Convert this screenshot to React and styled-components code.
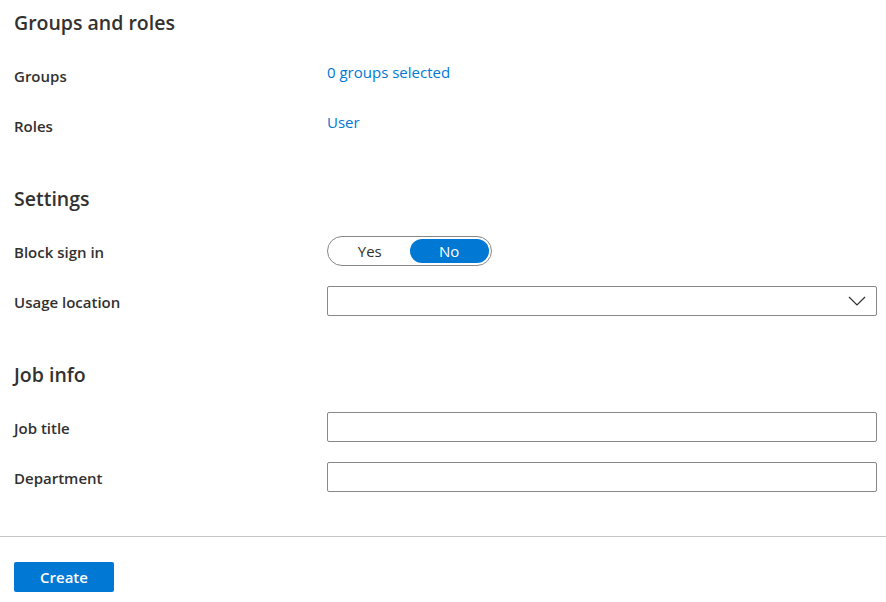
import styled, { createGlobalStyle } from "styled-components";

const GlobalStyle = createGlobalStyle`
  body {
    margin: 0;
    background: #ffffff;
    font-family: "Open Sans", "Noto Sans", sans-serif;
    color: #323130;
  }
`;

const Page = styled.div`
  width: 886px;
  height: 602px;
  overflow: hidden;
  box-sizing: border-box;
`;

const Form = styled.div`
  padding: 10px 9px 0 14px;
`;

const Section = styled.section`
  & + & {
    margin-top: 46px;
  }
`;

const Heading = styled.h2`
  margin: 0 0 24px;
  font-size: 19.5px;
  line-height: 26px;
  font-weight: 600;
  color: #323130;
`;

const Row = styled.div`
  display: grid;
  grid-template-columns: 313px 1fr;
  align-items: center;
  min-height: 30px;
  & + & {
    margin-top: 20px;
  }
`;

const Label = styled.span`
  font-size: 15px;
  font-weight: 600;
  line-height: 20px;
  padding-top: 2px;
`;

const LinkValue = styled.a`
  align-self: start;
  padding-top: 2px;
  font-size: 15px;
  line-height: 20px;
  color: #0078d4;
  text-decoration: none;
  cursor: pointer;
`;

const Toggle = styled.div`
  display: flex;
  width: 165px;
  height: 30px;
  box-sizing: border-box;
  padding: 2px;
  border: 1px solid #8a8886;
  border-radius: 15px;
`;

const ToggleOption = styled.button`
  flex: 1;
  border: none;
  border-radius: 12px;
  font-family: inherit;
  font-size: 15px;
  padding: 0;
  background: ${(p) => (p.$active ? "#0078d4" : "transparent")};
  color: ${(p) => (p.$active ? "#ffffff" : "#323130")};
  cursor: pointer;
`;

const Input = styled.input`
  box-sizing: border-box;
  width: 100%;
  height: 30px;
  border: 1px solid #8a8886;
  border-radius: 2px;
  padding: 0 8px;
  font-family: inherit;
  font-size: 15px;
  outline: none;
`;

const Select = styled.div`
  box-sizing: border-box;
  height: 30px;
  border: 1px solid #8a8886;
  border-radius: 2px;
  display: flex;
  align-items: center;
  justify-content: flex-end;
  padding-right: 10px;
`;

const Divider = styled.hr`
  margin: 44px 0 0;
  border: none;
  border-top: 1px solid #c8c6c4;
`;

const Footer = styled.div`
  padding: 25px 14px 0;
`;

const PrimaryButton = styled.button`
  width: 100px;
  height: 30px;
  border: none;
  border-radius: 2px;
  background: #0078d4;
  color: #ffffff;
  font-family: inherit;
  font-size: 15px;
  font-weight: 600;
  cursor: pointer;
`;

const Chevron = () => (
  <svg width="18" height="10" viewBox="0 0 18 10">
    <path d="M1 1 L9 9 L17 1" fill="none" stroke="#323130" strokeWidth="1.2" />
  </svg>
);

export default function App() {
  return (
    <Page>
      <GlobalStyle />
      <Form>
        <Section>
          <Heading>Groups and roles</Heading>
          <Row>
            <Label>Groups</Label>
            <LinkValue>0 groups selected</LinkValue>
          </Row>
          <Row>
            <Label>Roles</Label>
            <LinkValue>User</LinkValue>
          </Row>
        </Section>

        <Section>
          <Heading>Settings</Heading>
          <Row>
            <Label>Block sign in</Label>
            <Toggle>
              <ToggleOption>Yes</ToggleOption>
              <ToggleOption $active>No</ToggleOption>
            </Toggle>
          </Row>
          <Row>
            <Label>Usage location</Label>
            <Select>
              <Chevron />
            </Select>
          </Row>
        </Section>

        <Section>
          <Heading>Job info</Heading>
          <Row>
            <Label>Job title</Label>
            <Input />
          </Row>
          <Row>
            <Label>Department</Label>
            <Input />
          </Row>
        </Section>
      </Form>
      <Divider />
      <Footer>
        <PrimaryButton>Create</PrimaryButton>
      </Footer>
    </Page>
  );
}
